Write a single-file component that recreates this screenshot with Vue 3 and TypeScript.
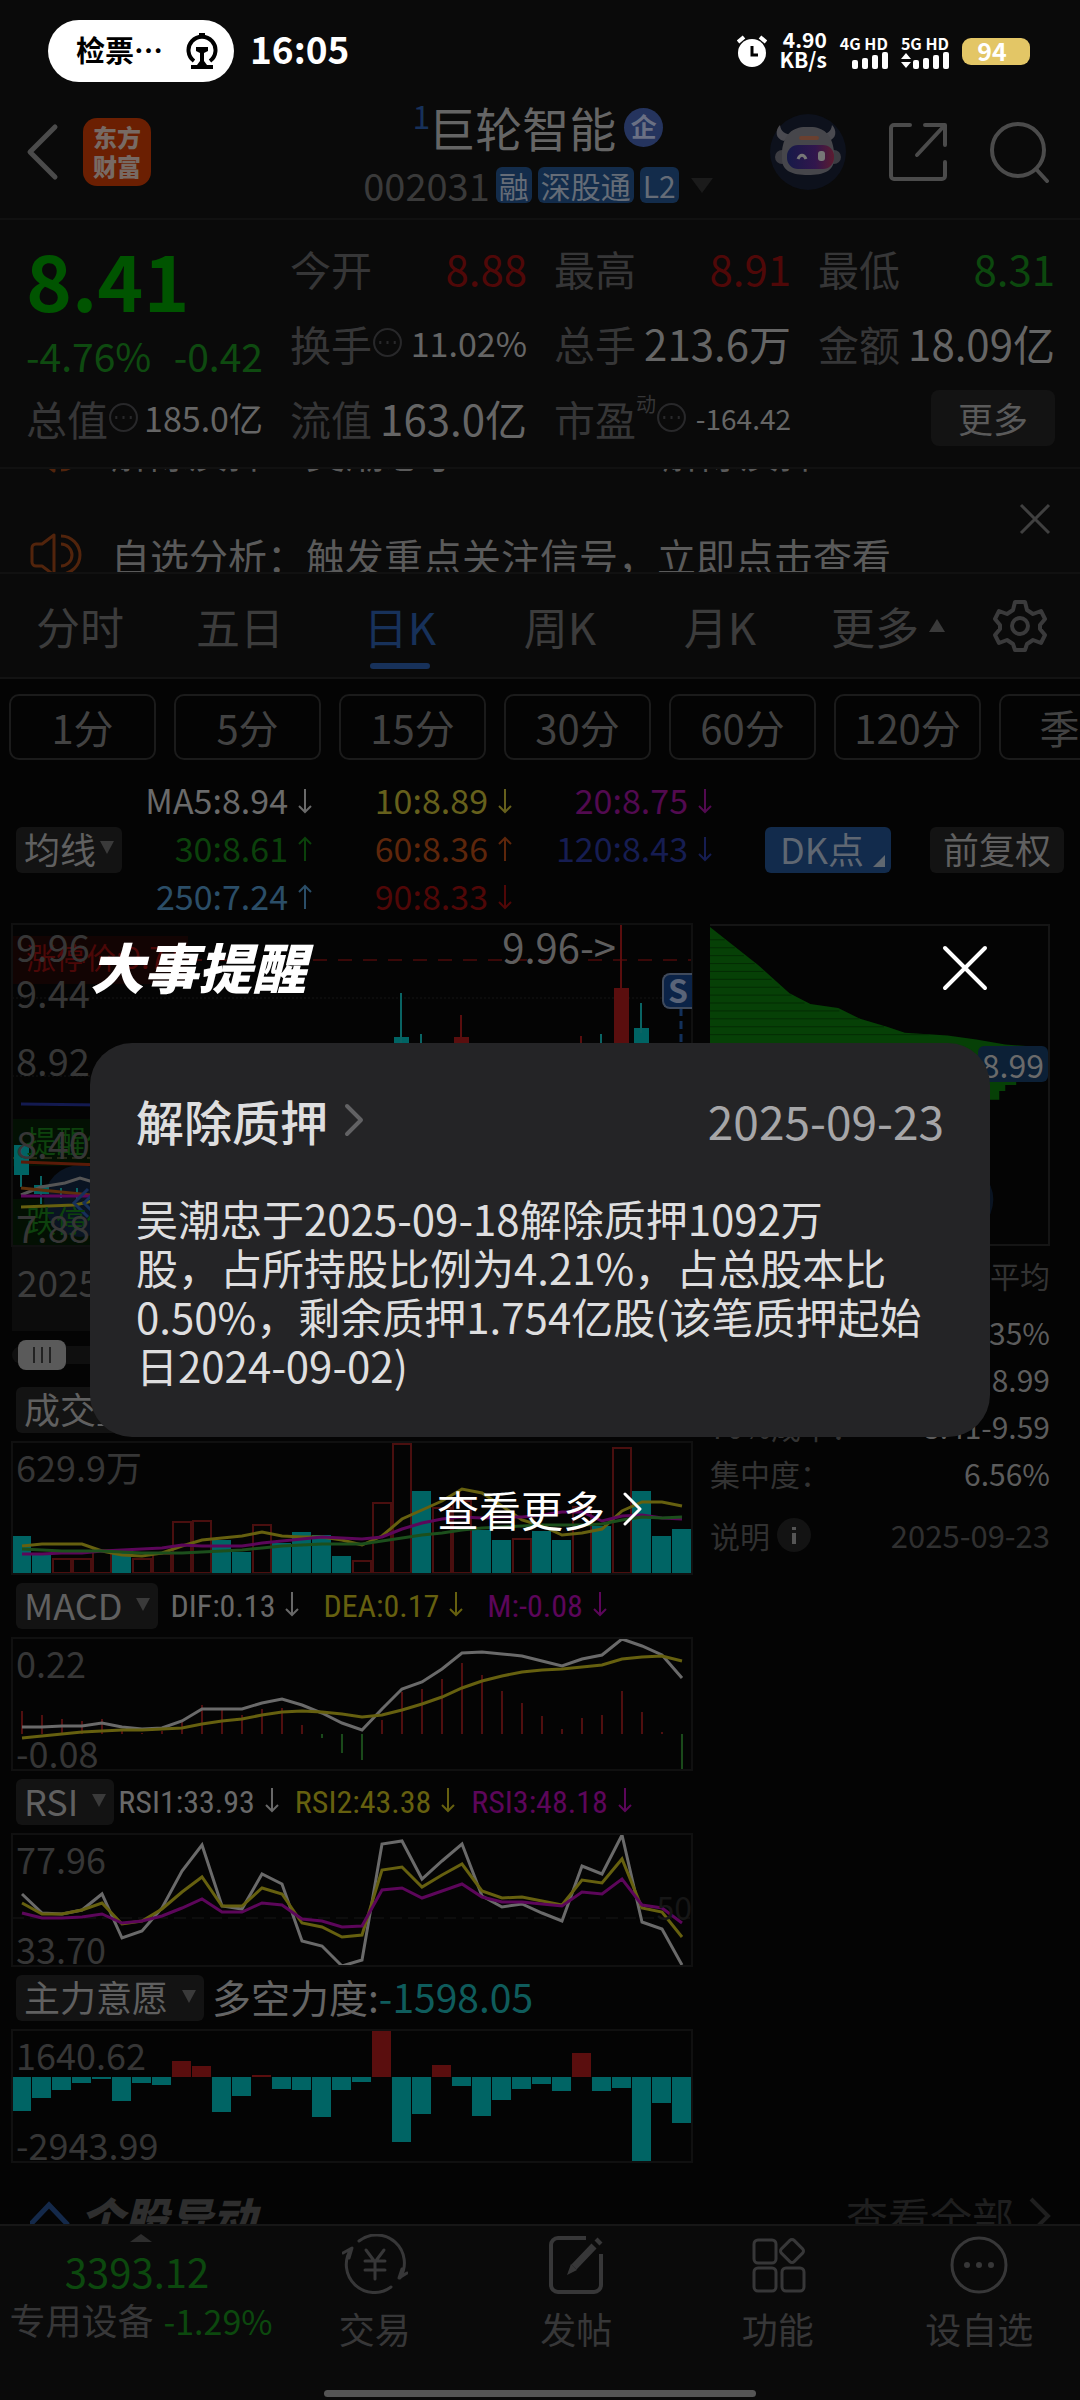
<script setup lang="ts">
interface Quote {
  label: string
  value: string
  tone?: 'up' | 'down'
  size?: 'mid' | 'small'
  info?: boolean
  sup?: string
}

const quotes: Quote[] = [
  { label: '今开', value: '8.88', tone: 'up' },
  { label: '最高', value: '8.91', tone: 'up' },
  { label: '最低', value: '8.31', tone: 'down' },
  { label: '换手', value: '11.02%', size: 'mid', info: true },
  { label: '总手', value: '213.6万' },
  { label: '金额', value: '18.09亿' },
]
const quotesLast: Quote[] = [
  { label: '总值', value: '185.0亿', size: 'mid', info: true },
  { label: '流值', value: '163.0亿' },
  { label: '市盈', value: '-164.42', size: 'small', info: true, sup: '动' },
]

const tabs = ['分时', '五日', '日K', '周K', '月K']
const periods = ['1分', '5分', '15分', '30分', '60分', '120分', '季K']

const averages = [
  { text: 'MA5:8.94', up: false, color: '#6a6a6a' },
  { text: '10:8.89', up: false, color: '#66601c' },
  { text: '20:8.75', up: false, color: '#520a50' },
  { text: '30:8.61', up: true, color: '#0b410b' },
  { text: '60:8.36', up: true, color: '#5e260b' },
  { text: '120:8.43', up: false, color: '#161d52' },
  { text: '250:7.24', up: true, color: '#2b4e68' },
  { text: '90:8.33', up: false, color: '#500707' },
]

const macd = [
  { text: 'DIF:0.13', color: '#686868' },
  { text: 'DEA:0.17', color: '#66600f' },
  { text: 'M:-0.08', color: '#5c065a' },
]
const rsi = [
  { text: 'RSI1:33.93', color: '#686868' },
  { text: 'RSI2:43.38', color: '#66600f' },
  { text: 'RSI3:48.18', color: '#5c065a' },
]

// Every series holds one sample per trading day, in thirds of a chart unit from the panel top.
const step = 20
const line = (values: number[]): string =>
  values.map((v, i) => `${i * step + 10},${Math.round(v / 3)}`).join(' ')

const volume: [string, number][] = [
  ['d', 283], ['d', 338], ['u', 348], ['u', 348], ['u', 320], ['d', 333], ['u', 348], ['u', 333], ['u', 236],
  ['u', 234], ['d', 293], ['d', 331], ['u', 246], ['d', 303], ['d', 271], ['d', 278], ['d', 343], ['u', 353],
  ['u', 181], ['u', 3], ['d', 146], ['u', 196], ['u', 173], ['d', 263], ['d', 295], ['u', 288], ['d', 268],
  ['d', 293], ['u', 193], ['d', 253], ['u', 15], ['d', 148], ['d', 281], ['d', 262],
]
const volumeBars = volume.map(([kind, top], i) => ({
  up: kind === 'u',
  x: i * step,
  y: Math.round(top / 3),
  h: 132 - Math.round(top / 3),
}))
const volumeLines = [
  { color: '#66600f', points: line([311, 305, 305, 305, 326, 338, 341, 333, 313, 295, 288, 283, 269, 281, 286, 286, 293, 310, 283, 231, 205, 176, 141, 154, 193, 233, 253, 279, 272, 260, 206, 181, 179, 192]) },
  { color: '#5c065a', points: line([336, 335, 334, 332, 326, 323, 321, 319, 310, 313, 313, 312, 302, 297, 290, 286, 288, 290, 286, 260, 244, 230, 226, 228, 226, 224, 220, 210, 211, 236, 223, 218, 228, 230]) },
  { color: '#1c4f1c', points: line([320, 323, 326, 326, 328, 331, 333, 333, 332, 329, 326, 323, 317, 313, 310, 307, 305, 306, 296, 287, 278, 272, 265, 259, 255, 251, 250, 249, 248, 246, 233, 224, 227, 226]) },
]

const macdZero = 96
const macdBars = [220, 231, 244, 249, 243, 272, 285, 279, 251, 201, 216, 231, 214, 210, 261, 299, 345, 366, 246, 162, 153, 123, 75, 111, 159, 195, 234, 273, 240, 231, 159, 222, 282, 396].map((v, i) => {
  const y = Math.round(v / 3)
  return { x: i * step + 9, y: Math.min(y, macdZero), h: Math.abs(macdZero - y), up: y < macdZero }
})
const macdLines = [
  { color: '#6a6a6a', points: line([266, 266, 263, 263, 255, 266, 272, 269, 249, 212, 212, 212, 195, 182, 201, 224, 255, 277, 212, 152, 131, 94, 45, 41, 48, 54, 69, 83, 63, 51, 2, 25, 51, 119]) },
  { color: '#66600f', points: line([301, 294, 288, 282, 279, 276, 276, 274, 270, 258, 249, 243, 231, 222, 219, 221, 228, 236, 231, 216, 197, 176, 151, 129, 114, 102, 96, 93, 88, 81, 63, 57, 55, 69]) },
]

const rsiLines = [
  { color: '#6a6a6a', points: line([179, 237, 240, 229, 179, 311, 290, 222, 112, 32, 217, 224, 119, 149, 322, 337, 395, 377, 30, 21, 134, 80, 29, 185, 220, 211, 237, 261, 96, 119, 2, 265, 285, 394]) },
  { color: '#66600f', points: line([207, 239, 239, 229, 208, 270, 262, 224, 174, 129, 215, 217, 163, 179, 267, 278, 310, 304, 107, 100, 159, 123, 89, 172, 193, 190, 202, 213, 137, 147, 74, 223, 235, 308]) },
  { color: '#5c065a', points: line([238, 251, 251, 249, 240, 267, 262, 246, 222, 196, 234, 234, 207, 214, 255, 262, 278, 275, 168, 163, 193, 171, 150, 189, 204, 204, 210, 215, 173, 179, 135, 214, 222, 267]) },
]

const forceZero = 47
const forceBars = [244, 204, 179, 158, 148, 214, 159, 166, 94, 109, 246, 197, 136, 178, 181, 262, 179, 155, 1, 336, 251, 106, 168, 258, 210, 178, 161, 183, 70, 184, 175, 396, 219, 280].map((v, i) => {
  const y = Math.round(v / 3)
  return { x: i * step, y: Math.min(y, forceZero), h: Math.max(2, Math.abs(forceZero - y)), up: y < forceZero }
})

const eventText =
  '吴潮忠于2025-09-18解除质押1092万\n股，占所持股比例为4.21%，占总股本比\n0.50%，剩余质押1.754亿股(该笔质押起始日2024-09-02)'
</script>

<template>
  <div class="app">
    <div class="status">
      <div class="pill">
        <span>检票…</span>
        <svg width="32" height="36" viewBox="0 0 32 36">
          <path d="M8 28 A13.5 13.5 0 1 1 24 28" fill="none" stroke="#000" stroke-width="4" />
          <path d="M13 0h6v5h-6zM10 14h12v4l-4 2v8l3 4h6v4H5v-4h6l3-4v-8l-4-2z" fill="#000" />
        </svg>
      </div>
      <span class="clock">16:05</span>
      <div class="status-right">
        <svg width="30" height="32" viewBox="0 0 30 32">
          <circle cx="15" cy="18" r="14" fill="#fff" />
          <path d="M1 7l6-5M29 7l-6-5" stroke="#fff" stroke-width="4" />
          <path d="M15 11v9h6" fill="none" stroke="#000" stroke-width="3" />
        </svg>
        <span class="speed">4.90<br />KB/s</span>
        <div class="signal">
          <span>4G HD</span>
          <svg width="36" height="17" viewBox="0 0 36 17" fill="#fff">
            <rect x="0" y="8" width="6" height="9" rx="2" /><rect x="10" y="6" width="6" height="11" rx="2" />
            <rect x="20" y="3" width="6" height="14" rx="2" /><rect x="30" y="0" width="6" height="17" rx="2" />
          </svg>
        </div>
        <div class="signal">
          <span>5G HD</span>
          <svg width="48" height="17" viewBox="0 0 48 17" fill="#fff">
            <path d="M0 7l5-6 5 6zM0 10l5 6 5-6z" />
            <rect x="12" y="8" width="6" height="9" rx="2" /><rect x="22" y="6" width="6" height="11" rx="2" />
            <rect x="32" y="3" width="6" height="14" rx="2" /><rect x="42" y="0" width="6" height="17" rx="2" />
          </svg>
        </div>
        <span class="battery">94</span>
      </div>
    </div>

    <header class="top">
      <div class="top-left">
        <button class="plain" aria-label="返回">
          <svg width="34" height="60" viewBox="0 0 34 60" fill="none" stroke="#4b4b4b" stroke-width="5" stroke-linecap="round" stroke-linejoin="round">
            <path d="M29 5L4 30l25 25" />
          </svg>
        </button>
        <div class="logo">东方<br />财富</div>
      </div>
      <div class="name">
        <h1><sup>1</sup>巨轮智能<span class="corp">企</span></h1>
        <div class="code">
          <span class="num">002031</span>
          <span class="tag">融</span><span class="tag">深股通</span><span class="tag">L2</span>
          <svg width="22" height="15" viewBox="0 0 22 15"><path d="M0 0h22L11 15z" fill="#1b1b1b" /></svg>
        </div>
      </div>
      <div class="top-right">
        <svg width="76" height="76" viewBox="0 0 76 76">
          <circle cx="38" cy="38" r="38" fill="#0d111c" />
          <path d="M14 27C5 25 5 16 10 11c1 7 5 9 12 10zM58 27c9-2 9-11 4-16-1 7-5 9-12 10z" fill="#4a4a50" />
          <circle cx="12" cy="43" r="7" fill="#3c3c42" /><circle cx="64" cy="43" r="7" fill="#3c3c42" />
          <path d="M12 37C14 19 24 12 38 13c14-1 24 6 26 24v8c0 12-10 16-26 16S12 57 12 45z" fill="#46464b" />
          <rect x="29" y="22" width="20" height="4" rx="2" fill="#6a4030" />
          <linearGradient id="visor" x1="0" x2="1"><stop offset="0" stop-color="#161a48" /><stop offset=".6" stop-color="#31164d" /><stop offset="1" stop-color="#5c1c30" /></linearGradient>
          <rect x="17" y="31" width="47" height="24" rx="11" fill="url(#visor)" />
          <path d="M28 45c2-5 6-5 8 0" fill="none" stroke="#777" stroke-width="3" /><rect x="48" y="37" width="7" height="10" rx="3" fill="#777" />
        </svg>
        <button class="plain" aria-label="分享">
          <svg width="60" height="60" viewBox="0 0 60 60" fill="none" stroke="#4b4b4b" stroke-width="4" stroke-linecap="round" stroke-linejoin="round">
            <path d="M22 3H6a3 3 0 0 0-3 3v48a3 3 0 0 0 3 3h48a3 3 0 0 0 3-3V40M37 3h20v20M56 4L29 33" />
          </svg>
        </button>
        <button class="plain" aria-label="搜索">
          <svg width="60" height="62" viewBox="0 0 60 62" fill="none" stroke="#4b4b4b" stroke-width="4" stroke-linecap="round">
            <circle cx="28" cy="29" r="26" /><path d="M46 48l11 12" />
          </svg>
        </button>
      </div>
    </header>

    <div class="scroll">
      <section class="quote">
        <div class="price">
          <strong>8.41</strong>
          <div class="change"><span>-4.76%</span><span>-0.42</span></div>
        </div>
        <div v-for="q in quotes" :key="q.label" class="cell">
          <span class="label">{{ q.label }}</span>
          <svg v-if="q.info" class="dots" viewBox="0 0 30 30"><circle cx="15" cy="15" r="13" /><path d="M7 15h2M14 15h2M21 15h2" /></svg>
          <span :class="['value', q.tone, q.size]">{{ q.value }}</span>
        </div>
        <div v-for="q in quotesLast" :key="q.label" class="cell">
          <span class="label">{{ q.label }}<sup v-if="q.sup">{{ q.sup }}</sup></span>
          <svg v-if="q.info" class="dots" viewBox="0 0 30 30"><circle cx="15" cy="15" r="13" /><path d="M7 15h2M14 15h2M21 15h2" /></svg>
          <span :class="['value', q.tone, q.size]">{{ q.value }}</span>
        </div>
        <div class="cell end"><button class="more">更多</button></div>
      </section>

      <section class="ticker">
        <div class="ticker-track">
          <p v-for="t in ['解除质押：吴潮忠于2025-09-18解除质押…', '自选分析：触发重点关注信号，立即点击查看']" :key="t">
            <svg width="52" height="44" viewBox="0 0 52 44" fill="none" stroke="#52240c" stroke-width="3" stroke-linejoin="round">
              <path d="M24 2v40L12 33H6a4 4 0 0 1-4-4V15a4 4 0 0 1 4-4h6z" /><path d="M31 11a11 11 0 0 1 0 22M31 3a19 19 0 0 1 0 38" />
            </svg>
            {{ t }}
          </p>
        </div>
        <button class="plain" aria-label="关闭提示">
          <svg width="32" height="32" viewBox="0 0 32 32" stroke="#404040" stroke-width="3"><path d="M2 2l28 28M30 2L2 30" /></svg>
        </button>
      </section>

      <nav class="tabs">
        <button v-for="t in tabs" :key="t" :class="{ on: t === '日K' }">{{ t }}</button>
        <button class="tab-more">更多<svg width="16" height="13" viewBox="0 0 16 13"><path d="M0 13h16L8 0z" fill="#3a3a3a" /></svg></button>
        <button class="gear" aria-label="设置">
          <svg width="54" height="54" viewBox="0 0 54 54" fill="none" stroke="#3a3a3b" stroke-width="4" stroke-linejoin="round">
            <path d="M22 3h10l2 8 6 4 8-3 4 8-5 6v4l5 6-4 8-8-3-6 4-2 6H22l-2-6-6-4-8 3-4-8 5-6v-4l-5-6 4-8 8 3 6-4z" /><circle cx="27" cy="27" r="8" />
          </svg>
        </button>
      </nav>

      <div class="periods">
        <button v-for="p in periods" :key="p">{{ p }}</button>
      </div>

      <div class="ma">
        <button class="chip">均线<i class="caret"></i></button>
        <div class="ma-grid">
          <span v-for="a in averages" :key="a.text" :style="{ color: a.color }">{{ a.text
            }}<svg class="arrow" viewBox="0 0 14 26"><path :d="a.up ? 'M7 25V2M1 8l6-6 6 6' : 'M7 1v23M1 18l6 6 6-6'" /></svg></span>
        </div>
        <button class="chip dk">DK点</button>
        <button class="chip adjust">前复权</button>
      </div>

      <div class="charts">
        <div class="left">
          <div class="panel kline">
            <svg class="plot" viewBox="0 0 680 322" preserveAspectRatio="none" fill="none">
              <rect x="0" y="12" width="176" height="48" fill="#120403" />
              <rect x="0" y="195" width="176" height="47" fill="#031003" />
              <rect x="0" y="275" width="176" height="47" fill="#031003" />
              <path d="M176 36H680" stroke="#3a0808" stroke-width="2" stroke-dasharray="14 11" />
              <path d="M0 74H680M0 152H680" stroke="#151515" stroke-dasharray="2 2" />
              <path d="M0 234H680" stroke="#4a4428" stroke-dasharray="10 5" />
              <circle cx="68" cy="277" r="36" fill="#0a1422" />
              <path d="M9 180l80 1" stroke="#131a50" stroke-width="3" />
              <path d="M2 221h15v30H2zM22 261h15v9H22zM382 113h15v20h-15zM622 104h15v20h-15z" fill="#006464" />
              <path d="M9 251v12M29 252v28M49 264v10M65 264v12M389 69v50M409 110v20M589 110v20M629 79v30" stroke="#0a6464" stroke-width="2" />
              <path d="M442 113h15v20h-15zM602 64h15v60h-15z" fill="#5a0e0e" />
              <path d="M449 91v30M569 112v20M609 0v70" stroke="#5a0e0e" stroke-width="2" />
              <path d="M9 238l80 3" stroke="#5a1a08" stroke-width="3" />
              <path d="M9 271l20-8 24-4 15-5 20 6" stroke="#555" stroke-width="3" />
              <path d="M9 264l80 8" stroke="#5e300b" stroke-width="3" />
              <path d="M9 272h80" stroke="#5c065a" stroke-width="3" />
              <path d="M9 283l54-2 26-6" stroke="#66600f" stroke-width="3" />
              <path d="M76 265l-14 14 14 14M86 265l-14 14 14 14" stroke="#16305a" stroke-width="3" />
              <path d="M669 84v50" stroke="#12305a" stroke-width="3" stroke-dasharray="8 5" />
            </svg>
            <span class="limit high">涨停价:9.71</span>
            <span class="limit warn">提醒价</span>
            <span class="limit low">跌停价</span>
            <div class="scale"><span>9.96</span><span>9.44</span><span>8.92</span><span>8.40</span><span>7.88</span></div>
            <span class="peak">9.96-&gt;</span>
            <span class="sell">S</span>
          </div>
          <div class="axis">2025</div>
          <input class="range" type="range" min="0" max="100" value="1" aria-label="时间范围" />

          <div class="bar first"><button class="chip">成交量<i class="caret"></i></button></div>
          <div class="panel">
            <svg class="plot" viewBox="0 0 680 132" preserveAspectRatio="none" fill="none">
              <template v-for="b in volumeBars" :key="b.x">
                <rect v-if="b.up" :x="b.x + 1" :y="b.y + 1" width="18" :height="b.h - 2" stroke="#4a0f0f" stroke-width="2" />
                <rect v-else :x="b.x" :y="b.y" width="19" :height="b.h" fill="#006464" />
              </template>
              <polyline v-for="l in volumeLines" :key="l.color" :points="l.points" :stroke="l.color" stroke-width="3" />
            </svg>
            <span class="max">629.9万</span>
          </div>

          <div class="bar narrow macd">
            <button class="chip">MACD<i class="caret"></i></button>
            <span v-for="m in macd" :key="m.text" :style="{ color: m.color }">{{ m.text }}<svg class="arrow" viewBox="0 0 14 26"><path d="M7 1v23M1 18l6 6 6-6" /></svg></span>
          </div>
          <div class="panel">
            <svg class="plot" viewBox="0 0 680 132" preserveAspectRatio="none" fill="none">
              <rect v-for="b in macdBars" :key="b.x" :x="b.x" :y="b.y" width="2" :height="b.h" :fill="b.up ? '#500f0f' : '#1a4a1a'" />
              <polyline v-for="l in macdLines" :key="l.color" :points="l.points" :stroke="l.color" stroke-width="3" />
            </svg>
            <span class="max">0.22</span><span class="min">-0.08</span>
          </div>

          <div class="bar narrow">
            <button class="chip">RSI<i class="caret"></i></button>
            <span v-for="m in rsi" :key="m.text" :style="{ color: m.color }">{{ m.text }}<svg class="arrow" viewBox="0 0 14 26"><path d="M7 1v23M1 18l6 6 6-6" /></svg></span>
          </div>
          <div class="panel">
            <span class="mid-line">50</span>
            <svg class="plot" viewBox="0 0 680 132" preserveAspectRatio="none" fill="none">
              <path d="M0 84H680" stroke="#171717" stroke-dasharray="12 6" />
              <polyline v-for="l in rsiLines" :key="l.color" :points="l.points" :stroke="l.color" stroke-width="3" />
            </svg>
            <span class="max">77.96</span><span class="min">33.70</span>
          </div>

          <div class="bar">
            <button class="chip">主力意愿<i class="caret"></i></button>
            <span class="force">多空力度:<b>-1598.05</b></span>
          </div>
          <div class="panel">
            <svg class="plot" viewBox="0 0 680 132" preserveAspectRatio="none">
              <rect v-for="b in forceBars" :key="b.x" :x="b.x" :y="b.y" width="19" :height="b.h" :fill="b.up ? '#5a0e0e' : '#006464'" />
            </svg>
            <span class="max">1640.62</span><span class="min">-2943.99</span>
          </div>
        </div>

        <aside class="cost">
          <div class="dist">
            <svg class="plot" viewBox="0 0 340 322" preserveAspectRatio="none">
              <path d="M0 1l49 39 31 28 21 11 28 4 22 11 27 8 18 6 43 3 29 4 29 5 28 2 13 7v24l-30 3v5h-11v6h-6v9H0z" fill="#064006" />
              <path d="M0 14h15M0 22h25M0 30h34M0 38h45M0 46h54M0 54h62M0 62h70M0 70h82M0 78h95M0 86h130M0 94h150M0 102h175M0 110h220" stroke="#042c04" />
              <circle cx="249" cy="277" r="36" fill="#0a1422" />
            </svg>
            <span class="avg">8.99</span>
          </div>
          <div class="cost-tab">平均</div>
          <dl>
            <div><dt></dt><dd>35%</dd></div>
            <div><dt></dt><dd>8.99</dd></div>
            <div><dt>70%成本：</dt><dd>8.41-9.59</dd></div>
            <div><dt>集中度：</dt><dd>6.56%</dd></div>
          </dl>
          <div class="note">
            <span>说明</span>
            <svg width="36" height="36" viewBox="0 0 36 36"><circle cx="18" cy="18" r="17" fill="#131313" /><path d="M18 10v3M18 16v11" stroke="#555" stroke-width="4" /></svg>
            <time>2025-09-23</time>
          </div>
        </aside>
      </div>

      <div class="moves">
        <svg width="40" height="44" viewBox="0 0 40 44" fill="none" stroke="#14294a" stroke-width="5"><path d="M0 31L19 11l19 20" /></svg>
        <h2>个股异动</h2>
        <a href="#">查看全部<svg width="24" height="40" viewBox="0 0 24 40" fill="none" stroke="#1f1f1f" stroke-width="4"><path d="M3 3l17 17L3 37" /></svg></a>
      </div>
    </div>

    <footer class="dock">
      <div class="sector">
        <svg width="22" height="8" viewBox="0 0 22 8"><path d="M0 8h22L11 0z" fill="#2d2d2d" /></svg>
        <b>3393.12</b>
        <div>专用设备<em>-1.29%</em></div>
      </div>
      <button>
        <svg width="66" height="60" viewBox="0 0 66 60" fill="none" stroke="#373738" stroke-width="3" stroke-linecap="round" stroke-linejoin="round">
          <path d="M17 7a28 28 0 0 1 41 37M49 53A28 28 0 0 1 9 15M1 19l9-5-3 10M65 39l-8 5 3-9" /><path d="M24 16l9 12 9-12M33 28v17M23 27h20M23 36h20" />
        </svg>交易
      </button>
      <button>
        <svg width="56" height="60" viewBox="0 0 56 60" fill="none" stroke="#373738" stroke-width="4">
          <path d="M38 4H10a7 7 0 0 0-7 7v40a7 7 0 0 0 7 7h36a7 7 0 0 0 7-7V20" /><path d="M26 33l20-21M49 9l3-3" stroke-width="7" /><path d="M19 41l4-11 6 6z" fill="#373738" stroke="none" />
        </svg>发帖
      </button>
      <button>
        <svg width="56" height="60" viewBox="0 0 56 60" fill="none" stroke="#373738" stroke-width="3">
          <rect x="4" y="6" width="22" height="23" rx="4" /><rect x="4" y="34" width="22" height="23" rx="4" /><rect x="32" y="34" width="22" height="23" rx="4" />
          <rect x="33" y="8" width="18" height="18" rx="3" transform="rotate(45 42 17)" />
        </svg>功能
      </button>
      <button>
        <svg width="60" height="60" viewBox="0 0 60 60" fill="none" stroke="#373738" stroke-width="3">
          <circle cx="30" cy="31" r="27" /><g fill="#373738" stroke="none"><circle cx="18" cy="31" r="3" /><circle cx="30" cy="31" r="3" /><circle cx="42" cy="31" r="3" /></g>
        </svg>设自选
      </button>
      <span class="home"></span>
    </footer>

    <div class="overlay" role="dialog" aria-label="大事提醒">
      <div class="overlay-head">
        <h2>大事提醒</h2>
        <button class="plain" aria-label="关闭">
          <svg width="46" height="46" viewBox="0 0 46 46" stroke="#fff" stroke-width="4" stroke-linecap="round"><path d="M3 3l40 40M43 3L3 43" /></svg>
        </button>
      </div>
      <article class="card">
        <div class="card-head">
          <h3>解除质押</h3>
          <svg width="20" height="34" viewBox="0 0 20 34" fill="none" stroke="#626264" stroke-width="4" stroke-linecap="round" stroke-linejoin="round"><path d="M3 3l14 14L3 31" /></svg>
          <time>2025-09-23</time>
        </div>
        <p>{{ eventText }}</p>
      </article>
      <a class="see-more" href="#">查看更多<svg width="20" height="34" viewBox="0 0 20 34" fill="none" stroke="#fff" stroke-width="3" stroke-linecap="round" stroke-linejoin="round"><path d="M2 2l15 15L2 32" /></svg></a>
    </div>
  </div>
</template>

<style>
body {
  background: #040404;
}
</style>

<style scoped>
.app,
.app * {
  box-sizing: border-box;
}
.app {
  position: relative;
  display: flex;
  flex-direction: column;
  height: 100vh;
  overflow: hidden;
  background: #040404;
  color: #656565;
  font-family: 'Noto Sans CJK SC', sans-serif;
}
h1, h2, h3, p, dl, dd {
  margin: 0;
}
button {
  margin: 0;
  padding: 0;
  border: 0;
  background: none;
  color: inherit;
  font: inherit;
}
a {
  color: inherit;
  text-decoration: none;
}
svg {
  flex: none;
}
.plain {
  display: flex;
}

.status {
  flex: none;
  display: flex;
  align-items: center;
  height: 94px;
  padding: 8px 50px 0 48px;
  background: #0a0a0a;
  color: #fff;
  font-weight: 700;
}
.pill {
  display: flex;
  align-items: center;
  justify-content: space-between;
  width: 186px;
  height: 62px;
  padding: 0 16px 0 28px;
  border-radius: 31px;
  background: #fff;
  color: #000;
  font-size: 29px;
  line-height: 32px;
  white-space: nowrap;
}
.pill span {
  padding-bottom: 4px;
}
.clock {
  margin-left: 16px;
  padding-bottom: 6px;
  font-size: 37px;
  line-height: 40px;
}
.status-right {
  display: flex;
  align-items: center;
  gap: 13px;
  margin-left: auto;
}
.speed {
  padding-bottom: 4px;
  font-size: 21px;
  line-height: 20px;
  text-align: right;
}
.signal {
  display: flex;
  flex-direction: column;
  align-items: flex-end;
  font-size: 16px;
  line-height: 18px;
}
.battery {
  width: 68px;
  height: 27px;
  padding-right: 8px;
  border-radius: 9px;
  background: #e3c666;
  font-size: 25px;
  line-height: 24px;
  text-align: center;
}

.top {
  flex: none;
  display: grid;
  grid-template-columns: 1fr auto 1fr;
  align-items: center;
  height: 126px;
  padding: 0 30px 8px 26px;
  border-bottom: 2px solid #111;
  background: #0a0a0a;
}
.top-left {
  display: flex;
  align-items: center;
  gap: 23px;
}
.logo {
  width: 68px;
  height: 68px;
  padding-top: 4px;
  border-radius: 14px;
  background: #6b1f02;
  color: #776a64;
  font-size: 24px;
  font-weight: 900;
  line-height: 29px;
  text-align: center;
}
.name h1 {
  display: flex;
  justify-content: center;
  align-items: center;
  height: 56px;
  font-size: 47px;
  font-weight: 400;
  line-height: 56px;
}
.name sup {
  align-self: flex-start;
  margin-right: -2px;
  color: #17315a;
  font-size: 32px;
  line-height: 32px;
}
.corp {
  width: 39px;
  height: 39px;
  margin-left: 8px;
  border-radius: 50%;
  background: #25345e;
  color: #6a7084;
  font-size: 26px;
  font-weight: 700;
  line-height: 36px;
  text-align: center;
}
.code {
  display: flex;
  align-items: center;
  gap: 6px;
  height: 40px;
  margin-top: 10px;
}
.num {
  color: #3a3a3a;
  font-size: 38px;
  line-height: 40px;
}
.tag {
  padding: 0 3px;
  border-radius: 6px;
  background: #132c4b;
  color: #656c77;
  font-size: 30px;
  line-height: 36px;
}
.code svg {
  margin-left: 6px;
}
.top-right {
  display: flex;
  align-items: center;
  justify-content: flex-end;
  gap: 42px;
}

.scroll {
  flex: 1;
  min-height: 0;
  overflow: hidden;
}
.quote {
  display: grid;
  grid-template-columns: repeat(4, 1fr);
  grid-template-rows: repeat(3, 75px);
  column-gap: 27px;
  height: 249px;
  padding: 10px 25px 0 26px;
  border-bottom: 2px solid #111;
  background: #0a0a0a;
}
.price {
  grid-row: span 2;
  color: #0e4a10;
}
.price strong {
  display: block;
  color: #005400;
  font-size: 78px;
  font-weight: 700;
  line-height: 96px;
}
.change {
  display: flex;
  justify-content: space-between;
  font-size: 39px;
  line-height: 58px;
}
.cell {
  display: flex;
  align-items: center;
  white-space: nowrap;
}
.label {
  color: #363637;
  font-size: 41px;
  line-height: 48px;
}
.label sup {
  font-size: 20px;
  line-height: 20px;
  vertical-align: 24px;
}
.value {
  margin-left: auto;
  font-size: 42px;
  line-height: 48px;
}
.value.up { color: #500808; }
.value.down { color: #0c480e; }
.value.mid { font-size: 34px; }
.value.small { font-size: 28px; }
.dots {
  width: 31px;
  height: 31px;
  fill: none;
  stroke: #28282a;
  stroke-width: 2;
}
.dots path {
  stroke-width: 3;
}
.end {
  justify-content: flex-end;
}
.more {
  width: 124px;
  height: 56px;
  border-radius: 8px;
  background: #131313;
  color: #5a5a5a;
  font-size: 35px;
  line-height: 50px;
}

.ticker {
  position: relative;
  height: 105px;
  overflow: hidden;
  border-bottom: 2px solid #111;
  background: #0a0a0a;
}
.ticker-track {
  margin-top: -70px;
}
.ticker p {
  display: flex;
  align-items: center;
  gap: 29px;
  height: 104px;
  padding-left: 30px;
  color: #5a5a5a;
  font-size: 39px;
  white-space: nowrap;
}
.ticker button {
  position: absolute;
  top: 34px;
  right: 29px;
}

.tabs {
  display: grid;
  grid-template-columns: repeat(6, 4fr) 3fr;
  height: 105px;
  border-bottom: 2px solid #131313;
  background: #0a0a0a;
  color: #3c3c3c;
  font-size: 44px;
}
.tabs button {
  display: flex;
  align-items: center;
  justify-content: center;
  gap: 10px;
}
.tabs .tab-more {
  padding-left: 16px;
}
.tabs .on {
  position: relative;
  color: #17315a;
}
.on::after {
  content: '';
  position: absolute;
  bottom: 8px;
  width: 60px;
  height: 6px;
  border-radius: 3px;
  background: #17315a;
}

.periods {
  display: flex;
  gap: 18px;
  padding: 15px 0 15px 9px;
  overflow: hidden;
}
.periods button {
  flex: none;
  width: 147px;
  height: 66px;
  border: 2px solid #1b1b1b;
  border-radius: 10px;
  color: #424242;
  font-size: 40px;
  line-height: 52px;
}

.ma {
  display: flex;
  align-items: center;
  height: 149px;
  padding: 0 16px;
}
.chip {
  display: flex;
  align-items: center;
  justify-content: center;
  gap: 4px;
  height: 46px;
  padding: 0 8px 4px;
  border-radius: 6px;
  background: #131313;
  color: #606060;
  font-size: 36px;
  line-height: 40px;
  white-space: nowrap;
}
.caret {
  border: 7px solid transparent;
  border-top: 13px solid #3a3a3a;
  border-bottom: 0;
}
.ma-grid {
  display: grid;
  grid-template-columns: repeat(3, 200px);
  flex: none;
  margin: 0 auto 0 -10px;
  padding-bottom: 4px;
  font-size: 34px;
  line-height: 48px;
  text-align: right;
  white-space: nowrap;
}
.arrow {
  width: 14px;
  height: 26px;
  margin-left: 10px;
  fill: none;
  stroke: currentColor;
  stroke-width: 2;
}
.dk {
  position: relative;
  width: 126px;
  margin-right: 39px;
  padding-right: 20px;
  background: #122b4c;
  color: #5f6772;
}
.dk::after {
  content: '';
  position: absolute;
  right: 6px;
  bottom: 6px;
  border-left: 12px solid transparent;
  border-bottom: 12px solid #606870;
}
.adjust {
  padding: 0 13px 4px;
}

.charts {
  display: grid;
  grid-template-columns: 680fr 340fr;
  column-gap: 18px;
  padding: 0 30px 0 12px;
}
.left {
  min-width: 0;
}
.panel {
  position: relative;
  height: 132px;
  outline: 2px solid #101010;
  outline-offset: -1px;
}
.kline {
  height: 322px;
}
.plot {
  display: block;
  width: 100%;
  height: 100%;
}
.max,
.min,
.scale {
  position: absolute;
  left: 4px;
  color: #363636;
  font-size: 36px;
  line-height: 36px;
}
.max { top: 6px; }
.min { bottom: 0; }
.scale {
  top: 4px;
  display: grid;
  grid-template-rows: 46px 68px 83px 84px 36px;
  font-size: 38px;
}
.limit {
  position: absolute;
  left: 14px;
  font-size: 30px;
  line-height: 46px;
  color: #0d420d;
}
.high { top: 9px; color: #4c0808; }
.warn { top: 192px; }
.low { top: 272px; }
.peak {
  position: absolute;
  right: 76px;
  top: 0;
  color: #5e5e5e;
  font-size: 40px;
  line-height: 44px;
}
.sell {
  position: absolute;
  right: 0;
  top: 49px;
  width: 30px;
  height: 36px;
  border: 2px solid #3f4a5c;
  border-right: 0;
  border-radius: 8px 0 0 8px;
  background: #0b2347;
  color: #5a6478;
  font-size: 32px;
  font-weight: 700;
  line-height: 28px;
  text-align: center;
}
.axis {
  height: 85px;
  padding-left: 5px;
  background: #0c0c0c;
  color: #3c3c3c;
  font-size: 37px;
  line-height: 70px;
}
.range {
  display: block;
  appearance: none;
  width: 100%;
  height: 18px;
  margin: 15px 0 23px;
  border-radius: 9px;
  background: #0f0f0f;
}
.range::-webkit-slider-thumb {
  appearance: none;
  width: 48px;
  height: 30px;
  border: 0;
  border-radius: 8px;
  background:
    linear-gradient(#222, #222) 15px 7px / 2px 16px no-repeat,
    linear-gradient(#222, #222) 23px 7px / 2px 16px no-repeat,
    linear-gradient(#222, #222) 31px 7px / 2px 16px no-repeat,
    #5a5a5a;
}
.bar {
  display: flex;
  align-items: center;
  gap: 8px;
  height: 64px;
  padding-left: 4px;
  white-space: nowrap;
}
.bar.first {
  height: 55px;
  padding-bottom: 9px;
}
.bar .caret {
  margin-left: 10px;
}
.narrow {
  gap: 16px;
  font-family: 'Liberation Sans Narrow', 'Roboto Condensed', 'Noto Sans CJK SC', sans-serif;
  font-size: 32px;
}
.narrow .chip {
  margin-right: -12px;
  font-family: 'Noto Sans CJK SC', sans-serif;
}
.macd {
  gap: 24px;
}
.force {
  padding-bottom: 4px;
  font-size: 39px;
  line-height: 46px;
}
.force b {
  color: #0f5c5c;
  font-weight: 400;
}
.mid-line {
  position: absolute;
  right: 0;
  top: 54px;
  color: #161616;
  font-size: 32px;
  line-height: 36px;
}

.cost {
  color: #333;
  font-size: 30px;
}
.dist {
  position: relative;
  height: 322px;
  border: 2px solid #151515;
  border-left: 0;
}
.avg {
  position: absolute;
  right: 0;
  top: 120px;
  padding: 0 4px;
  border-radius: 6px;
  background: #0c2036;
  color: #6a6a6a;
  font-size: 32px;
  line-height: 36px;
}
.cost-tab {
  padding-top: 14px;
  line-height: 30px;
  text-align: right;
}
.cost dl {
  padding-top: 19px;
}
.cost dl div {
  display: flex;
  justify-content: space-between;
  line-height: 47px;
}
.cost dd {
  color: #5c5c5c;
}
.note {
  display: flex;
  align-items: center;
  gap: 6px;
  margin-top: 15px;
  color: #303030;
}
.note time {
  margin-left: auto;
  font-size: 31px;
}

.moves {
  display: flex;
  align-items: center;
  gap: 10px;
  padding: 30px 28px 0 30px;
  color: #2e2e2e;
  white-space: nowrap;
}
.moves h2 {
  font-size: 44px;
  font-style: italic;
  font-weight: 900;
  line-height: 48px;
}
.moves a {
  display: flex;
  align-items: center;
  gap: 14px;
  margin-left: auto;
  color: #1f1f1f;
  font-size: 42px;
  line-height: 48px;
}

.dock {
  position: relative;
  flex: none;
  display: flex;
  height: 176px;
  border-top: 2px solid #171717;
  background: #0a0a0a;
  color: #373738;
  font-size: 36px;
  white-space: nowrap;
}
.sector {
  display: flex;
  flex-direction: column;
  align-items: center;
  width: 274px;
  padding: 8px 0 0 8px;
}
.sector b {
  margin-top: 4px;
  padding-right: 8px;
  color: #0c480e;
  font-size: 40px;
  font-weight: 400;
  line-height: 50px;
}
.sector div {
  line-height: 46px;
}
.sector em {
  margin-left: 10px;
  color: #0c480e;
  font-size: 34px;
  font-style: normal;
}
.dock button {
  flex: 1;
  display: flex;
  flex-direction: column;
  align-items: center;
  gap: 12px;
  padding-top: 8px;
  line-height: 44px;
}
.home {
  position: absolute;
  left: 30%;
  right: 30%;
  bottom: 3px;
  height: 7px;
  border-radius: 4px;
  background: #555;
}

.overlay {
  position: absolute;
  inset: 0;
  display: flex;
  flex-direction: column;
  padding: 932px 90px 0;
}
.overlay-head {
  display: flex;
  align-items: center;
  justify-content: space-between;
  height: 72px;
  color: #fff;
}
.overlay-head h2 {
  padding-bottom: 4px;
  font-size: 54px;
  font-style: italic;
  font-weight: 900;
  line-height: 60px;
}
.card {
  margin-top: 39px;
  padding: 44px 46px 48px;
  border-radius: 42px;
  background: #242426;
  color: #dededf;
}
.card-head {
  display: flex;
  align-items: center;
  gap: 16px;
  height: 66px;
}
.card-head h3 {
  font-size: 48px;
  font-weight: 500;
  line-height: 56px;
}
.card-head time {
  margin-left: auto;
  color: #a6a6a8;
  font-size: 46px;
  line-height: 56px;
}
.card p {
  margin-top: 40px;
  font-size: 42px;
  line-height: 49px;
  white-space: pre-line;
}
.overlay-head .plain {
  padding-right: 2px;
}
.see-more {
  display: flex;
  align-items: center;
  justify-content: center;
  gap: 18px;
  margin-top: 42px;
  color: #fff;
  font-size: 42px;
  line-height: 60px;
}
</style>
